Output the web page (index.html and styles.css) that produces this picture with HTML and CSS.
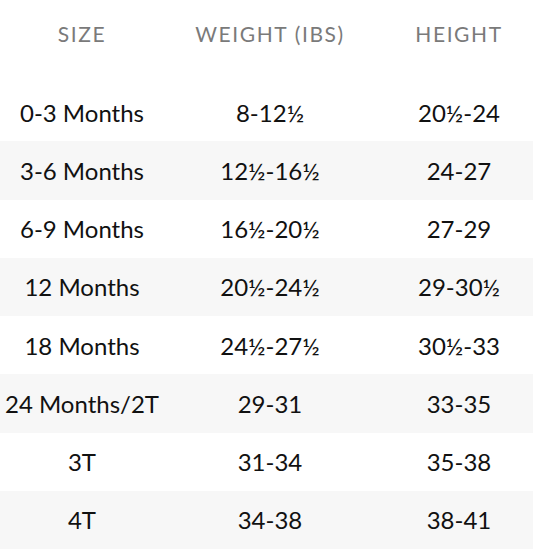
FILE: index.html
```html
<!DOCTYPE html>
<html lang="en">
<head>
<meta charset="utf-8">
<title>Size Chart</title>
<link rel="stylesheet" href="styles.css">
</head>
<body>
<div class="chart">
  <div class="row head">
    <div class="cell">SIZE</div>
    <div class="cell">WEIGHT (IBS)</div>
    <div class="cell">HEIGHT</div>
  </div>
  <div class="row">
    <div class="cell">0-3 Months</div>
    <div class="cell">8-12½</div>
    <div class="cell">20½-24</div>
  </div>
  <div class="row alt">
    <div class="cell">3-6 Months</div>
    <div class="cell">12½-16½</div>
    <div class="cell">24-27</div>
  </div>
  <div class="row">
    <div class="cell">6-9 Months</div>
    <div class="cell">16½-20½</div>
    <div class="cell">27-29</div>
  </div>
  <div class="row alt">
    <div class="cell">12 Months</div>
    <div class="cell">20½-24½</div>
    <div class="cell">29-30½</div>
  </div>
  <div class="row">
    <div class="cell">18 Months</div>
    <div class="cell">24½-27½</div>
    <div class="cell">30½-33</div>
  </div>
  <div class="row alt">
    <div class="cell">24 Months/2T</div>
    <div class="cell">29-31</div>
    <div class="cell">33-35</div>
  </div>
  <div class="row">
    <div class="cell">3T</div>
    <div class="cell">31-34</div>
    <div class="cell">35-38</div>
  </div>
  <div class="row alt">
    <div class="cell">4T</div>
    <div class="cell">34-38</div>
    <div class="cell">38-41</div>
  </div>
</div>
</body>
</html>
```
FILE: styles.css
```css
html, body {
  margin: 0;
  padding: 0;
  background: #ffffff;
  overflow: hidden;
}

.chart {
  width: 542px;
  font-family: "Lato", "Liberation Sans", sans-serif;
  color: #111111;
}

.row {
  display: grid;
  grid-template-columns: 164px 212px 166px;
  height: 58.25px;
  align-items: center;
  font-size: 24px;
}

.row.alt {
  background: #f7f7f7;
}

.row.head {
  height: 83px;
  align-items: start;
  padding-top: 0;
  box-sizing: border-box;
  font-size: 21px;
  color: #7a7a7a;
  letter-spacing: 1.6px;
}

.head .cell {
  padding-top: 21px;
}

.cell {
  text-align: center;
  white-space: nowrap;
}
```
